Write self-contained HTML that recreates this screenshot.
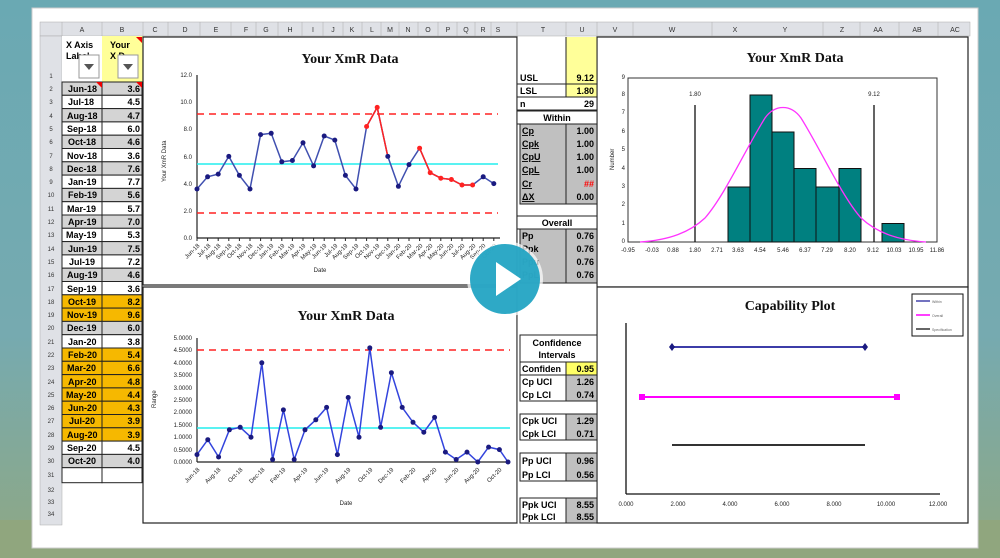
<!DOCTYPE html>
<html><head><meta charset="utf-8"><style>
html,body{margin:0;padding:0;width:1000px;height:558px;overflow:hidden}
svg{display:block}
text{font-family:"Liberation Sans",sans-serif}
.h{font-size:7px;fill:#333;text-anchor:middle}
.c{font-size:9px;font-weight:bold;fill:#000}
.r{font-size:6px;fill:#333;text-anchor:middle}
.t{font-family:"Liberation Serif",serif;font-weight:bold;font-size:14px;fill:#111;text-anchor:middle}
.ax{font-size:6px;fill:#222}
</style></head><body>
<svg width="1000" height="558" viewBox="0 0 1000 558" xmlns="http://www.w3.org/2000/svg">
<defs>
<linearGradient id="bg" x1="0" y1="0" x2="0" y2="1">
<stop offset="0" stop-color="#6aa9b3"/><stop offset="0.6" stop-color="#76aab0"/><stop offset="1" stop-color="#8fa883"/>
</linearGradient>
</defs>
<rect width="1000" height="558" fill="url(#bg)"/>
<rect x="0" y="520" width="1000" height="38" fill="#90a67e"/>
<rect x="32" y="8" width="946" height="540" fill="#fff" stroke="#ccc"/>
<rect x="40" y="20" width="930" height="505" fill="#fff"/>
<!-- column header -->
<rect x="40" y="22" width="930" height="14" fill="#dfe1e6" stroke="#aaa" stroke-width="0.5"/>
<g class="h">
<text x="82" y="32">A</text><text x="122" y="32">B</text><text x="155" y="32">C</text><text x="185" y="32">D</text><text x="216" y="32">E</text><text x="246" y="32">F</text><text x="266" y="32">G</text><text x="290" y="32">H</text><text x="313" y="32">I</text><text x="333" y="32">J</text><text x="352" y="32">K</text><text x="372" y="32">L</text><text x="390" y="32">M</text><text x="408" y="32">N</text><text x="428" y="32">O</text><text x="448" y="32">P</text><text x="466" y="32">Q</text><text x="483" y="32">R</text><text x="498" y="32">S</text><text x="543" y="32">T</text><text x="582" y="32">U</text><text x="615" y="32">V</text><text x="672" y="32">W</text><text x="735" y="32">X</text><text x="785" y="32">Y</text><text x="842" y="32">Z</text><text x="878" y="32">AA</text><text x="917" y="32">AB</text><text x="955" y="32">AC</text>
</g>
<g stroke="#aaa" stroke-width="0.5">
<line x1="62" y1="22" x2="62" y2="36"/><line x1="102" y1="22" x2="102" y2="36"/><line x1="143" y1="22" x2="143" y2="36"/><line x1="168" y1="22" x2="168" y2="36"/><line x1="200" y1="22" x2="200" y2="36"/><line x1="231" y1="22" x2="231" y2="36"/><line x1="256" y1="22" x2="256" y2="36"/><line x1="278" y1="22" x2="278" y2="36"/><line x1="302" y1="22" x2="302" y2="36"/><line x1="323" y1="22" x2="323" y2="36"/><line x1="343" y1="22" x2="343" y2="36"/><line x1="362" y1="22" x2="362" y2="36"/><line x1="381" y1="22" x2="381" y2="36"/><line x1="399" y1="22" x2="399" y2="36"/><line x1="418" y1="22" x2="418" y2="36"/><line x1="438" y1="22" x2="438" y2="36"/><line x1="457" y1="22" x2="457" y2="36"/><line x1="475" y1="22" x2="475" y2="36"/><line x1="491" y1="22" x2="491" y2="36"/><line x1="517" y1="22" x2="517" y2="36"/><line x1="566" y1="22" x2="566" y2="36"/><line x1="597" y1="22" x2="597" y2="36"/><line x1="633" y1="22" x2="633" y2="36"/><line x1="712" y1="22" x2="712" y2="36"/><line x1="823" y1="22" x2="823" y2="36"/><line x1="860" y1="22" x2="860" y2="36"/><line x1="899" y1="22" x2="899" y2="36"/><line x1="938" y1="22" x2="938" y2="36"/>
</g>
<!-- row number column -->
<rect x="40" y="36" width="22" height="489" fill="#dfe1e6" stroke="#aaa" stroke-width="0.5"/>
<g class="r">
<text x="51" y="78">1</text>
<text x="51" y="91">2</text><text x="51" y="104">3</text><text x="51" y="118">4</text><text x="51" y="131">5</text><text x="51" y="144">6</text><text x="51" y="158">7</text><text x="51" y="171">8</text><text x="51" y="184">9</text><text x="51" y="197">10</text><text x="51" y="211">11</text><text x="51" y="224">12</text><text x="51" y="237">13</text><text x="51" y="251">14</text><text x="51" y="264">15</text><text x="51" y="277">16</text><text x="51" y="291">17</text><text x="51" y="304">18</text><text x="51" y="317">19</text><text x="51" y="330">20</text><text x="51" y="344">21</text><text x="51" y="357">22</text><text x="51" y="370">23</text><text x="51" y="384">24</text><text x="51" y="397">25</text><text x="51" y="410">26</text><text x="51" y="423">27</text><text x="51" y="437">28</text><text x="51" y="450">29</text><text x="51" y="463">30</text><text x="51" y="477">31</text><text x="51" y="492">32</text><text x="51" y="504">33</text><text x="51" y="516">34</text>
</g>
<!-- header cells -->
<rect x="62" y="36" width="40" height="46" fill="#fff"/>
<rect x="102" y="36" width="41" height="46" fill="#ffff99"/>
<text x="66" y="48" class="c" font-size="7">X Axis</text><text x="66" y="59" class="c" font-size="7">Label</text>
<text x="110" y="48" class="c" font-size="7">Your</text><text x="110" y="59" class="c" font-size="7">X D</text>
<rect x="79" y="55" width="20" height="23" fill="#fff" stroke="#999"/><path d="M84 64 L94 64 L89 70Z" fill="#555"/>
<rect x="118" y="55" width="20" height="23" fill="#fff" stroke="#999"/><path d="M123 64 L133 64 L128 70Z" fill="#555"/>
<path d="M136 37 L142 37 L142 43Z" fill="#e00"/>
<!-- data rows -->
<g stroke="#222" stroke-width="1">
<rect x="62" y="82" width="40" height="13.3" fill="#d4d4d4"/><rect x="102" y="82" width="40" height="13.3" fill="#d4d4d4"/>
<rect x="62" y="95.3" width="40" height="13.3" fill="#fff"/><rect x="102" y="95.3" width="40" height="13.3" fill="#fff"/>
<rect x="62" y="108.6" width="40" height="13.3" fill="#d4d4d4"/><rect x="102" y="108.6" width="40" height="13.3" fill="#d4d4d4"/>
<rect x="62" y="121.9" width="40" height="13.3" fill="#fff"/><rect x="102" y="121.9" width="40" height="13.3" fill="#fff"/>
<rect x="62" y="135.2" width="40" height="13.3" fill="#d4d4d4"/><rect x="102" y="135.2" width="40" height="13.3" fill="#d4d4d4"/>
<rect x="62" y="148.5" width="40" height="13.3" fill="#fff"/><rect x="102" y="148.5" width="40" height="13.3" fill="#fff"/>
<rect x="62" y="161.8" width="40" height="13.3" fill="#d4d4d4"/><rect x="102" y="161.8" width="40" height="13.3" fill="#d4d4d4"/>
<rect x="62" y="175.1" width="40" height="13.3" fill="#fff"/><rect x="102" y="175.1" width="40" height="13.3" fill="#fff"/>
<rect x="62" y="188.4" width="40" height="13.3" fill="#d4d4d4"/><rect x="102" y="188.4" width="40" height="13.3" fill="#d4d4d4"/>
<rect x="62" y="201.7" width="40" height="13.3" fill="#fff"/><rect x="102" y="201.7" width="40" height="13.3" fill="#fff"/>
<rect x="62" y="215" width="40" height="13.3" fill="#d4d4d4"/><rect x="102" y="215" width="40" height="13.3" fill="#d4d4d4"/>
<rect x="62" y="228.3" width="40" height="13.3" fill="#fff"/><rect x="102" y="228.3" width="40" height="13.3" fill="#fff"/>
<rect x="62" y="241.6" width="40" height="13.3" fill="#d4d4d4"/><rect x="102" y="241.6" width="40" height="13.3" fill="#d4d4d4"/>
<rect x="62" y="254.9" width="40" height="13.3" fill="#fff"/><rect x="102" y="254.9" width="40" height="13.3" fill="#fff"/>
<rect x="62" y="268.2" width="40" height="13.3" fill="#d4d4d4"/><rect x="102" y="268.2" width="40" height="13.3" fill="#d4d4d4"/>
<rect x="62" y="281.5" width="40" height="13.3" fill="#fff"/><rect x="102" y="281.5" width="40" height="13.3" fill="#fff"/>
<rect x="62" y="294.8" width="40" height="13.3" fill="#f6b800"/><rect x="102" y="294.8" width="40" height="13.3" fill="#f6b800"/>
<rect x="62" y="308.1" width="40" height="13.3" fill="#f6b800"/><rect x="102" y="308.1" width="40" height="13.3" fill="#f6b800"/>
<rect x="62" y="321.4" width="40" height="13.3" fill="#d4d4d4"/><rect x="102" y="321.4" width="40" height="13.3" fill="#d4d4d4"/>
<rect x="62" y="334.7" width="40" height="13.3" fill="#fff"/><rect x="102" y="334.7" width="40" height="13.3" fill="#fff"/>
<rect x="62" y="348" width="40" height="13.3" fill="#f6b800"/><rect x="102" y="348" width="40" height="13.3" fill="#f6b800"/>
<rect x="62" y="361.3" width="40" height="13.3" fill="#f6b800"/><rect x="102" y="361.3" width="40" height="13.3" fill="#f6b800"/>
<rect x="62" y="374.6" width="40" height="13.3" fill="#f6b800"/><rect x="102" y="374.6" width="40" height="13.3" fill="#f6b800"/>
<rect x="62" y="387.9" width="40" height="13.3" fill="#f6b800"/><rect x="102" y="387.9" width="40" height="13.3" fill="#f6b800"/>
<rect x="62" y="401.2" width="40" height="13.3" fill="#f6b800"/><rect x="102" y="401.2" width="40" height="13.3" fill="#f6b800"/>
<rect x="62" y="414.5" width="40" height="13.3" fill="#f6b800"/><rect x="102" y="414.5" width="40" height="13.3" fill="#f6b800"/>
<rect x="62" y="427.8" width="40" height="13.3" fill="#f6b800"/><rect x="102" y="427.8" width="40" height="13.3" fill="#f6b800"/>
<rect x="62" y="441.1" width="40" height="13.3" fill="#fff"/><rect x="102" y="441.1" width="40" height="13.3" fill="#fff"/>
<rect x="62" y="454.4" width="40" height="13.3" fill="#d4d4d4"/><rect x="102" y="454.4" width="40" height="13.3" fill="#d4d4d4"/>
<rect x="62" y="467.7" width="40" height="15" fill="#fff"/><rect x="102" y="467.7" width="40" height="15" fill="#fff"/>
</g>
<g class="c" font-size="8.5">
<text x="68" y="92">Jun-18</text><text x="68" y="105">Jul-18</text><text x="67" y="119">Aug-18</text><text x="67" y="132">Sep-18</text><text x="68" y="145">Oct-18</text><text x="67" y="159">Nov-18</text><text x="67" y="172">Dec-18</text><text x="68" y="185">Jan-19</text><text x="68" y="198">Feb-19</text><text x="67" y="212">Mar-19</text><text x="68" y="225">Apr-19</text><text x="66" y="238">May-19</text><text x="68" y="252">Jun-19</text><text x="69" y="265">Jul-19</text><text x="67" y="278">Aug-19</text><text x="67" y="292">Sep-19</text><text x="68" y="305">Oct-19</text><text x="67" y="318">Nov-19</text><text x="67" y="331">Dec-19</text><text x="68" y="345">Jan-20</text><text x="68" y="358">Feb-20</text><text x="67" y="371">Mar-20</text><text x="68" y="385">Apr-20</text><text x="66" y="398">May-20</text><text x="68" y="411">Jun-20</text><text x="69" y="424">Jul-20</text><text x="67" y="438">Aug-20</text><text x="67" y="451">Sep-20</text><text x="68" y="464">Oct-20</text>
</g>
<g class="c" font-size="8.5" text-anchor="end">
<text x="140" y="92">3.6</text><text x="140" y="105">4.5</text><text x="140" y="119">4.7</text><text x="140" y="132">6.0</text><text x="140" y="145">4.6</text><text x="140" y="159">3.6</text><text x="140" y="172">7.6</text><text x="140" y="185">7.7</text><text x="140" y="198">5.6</text><text x="140" y="212">5.7</text><text x="140" y="225">7.0</text><text x="140" y="238">5.3</text><text x="140" y="252">7.5</text><text x="140" y="265">7.2</text><text x="140" y="278">4.6</text><text x="140" y="292">3.6</text><text x="140" y="305">8.2</text><text x="140" y="318">9.6</text><text x="140" y="331">6.0</text><text x="140" y="345">3.8</text><text x="140" y="358">5.4</text><text x="140" y="371">6.6</text><text x="140" y="385">4.8</text><text x="140" y="398">4.4</text><text x="140" y="411">4.3</text><text x="140" y="424">3.9</text><text x="140" y="438">3.9</text><text x="140" y="451">4.5</text><text x="140" y="464">4.0</text>
</g>
<path d="M96 82 L102 82 L102 88Z M136 82 L142 82 L142 88Z" fill="#e00"/>

<!-- chart frames -->
<g fill="#fff" stroke="#222" stroke-width="1.2">
<rect x="143" y="37" width="374" height="248"/>
<rect x="143" y="287" width="374" height="236"/>
<rect x="597" y="37" width="371" height="250"/>
<rect x="597" y="287" width="371" height="236"/>
</g>

<!-- Chart 1 -->
<text x="350" y="63" class="t">Your XmR Data</text>
<g stroke="#222" stroke-width="1.2"><line x1="197" y1="75" x2="197" y2="238"/><line x1="197" y1="238" x2="500" y2="238"/></g>
<g class="ax" text-anchor="end"><text x="192" y="240">0.0</text><text x="192" y="213">2.0</text><text x="192" y="186">4.0</text><text x="192" y="159">6.0</text><text x="192" y="131">8.0</text><text x="192" y="104">10.0</text><text x="192" y="77">12.0</text></g>
<text x="0" y="0" class="ax" transform="translate(166,182) rotate(-90)">Your XmR Data</text>
<line x1="197" y1="114" x2="498" y2="114" stroke="#f22" stroke-width="1.5" stroke-dasharray="7,5"/>
<line x1="197" y1="213" x2="498" y2="213" stroke="#f22" stroke-width="1.5" stroke-dasharray="7,5"/>
<line x1="197" y1="164" x2="498" y2="164" stroke="#2ee" stroke-width="1.5"/>
<polyline fill="none" stroke="#4050b0" stroke-width="1.5" points="197,189 207.6,176.8 218.2,174.1 228.8,156.4 239.4,175.4 250,189 260.6,134.6 271.2,133.3 281.8,161.8 292.4,160.5 303,142.8 313.6,165.9 324.2,136 334.8,140.1 345.4,175.4 356,189 366.6,126.5 377.2,107.4 387.8,156.4 398.4,186.3 409,164.6 419.6,148.2 430.2,172.7 440.8,178.2 451.4,179.5 462,185 472.6,185 483.2,176.8 493.8,183.6"/>
<polyline fill="none" stroke="#f22" stroke-width="1.5" points="366.6,126.5 377.2,107.4 387.8,156.4"/>
<polyline fill="none" stroke="#f22" stroke-width="1.5" points="419.6,148.2 430.2,172.7 440.8,178.2 451.4,179.5 462,185 472.6,185"/>
<g fill="#1a1a80"><circle cx="197" cy="189" r="2.5"/><circle cx="207.6" cy="176.8" r="2.5"/><circle cx="218.2" cy="174.1" r="2.5"/><circle cx="228.8" cy="156.4" r="2.5"/><circle cx="239.4" cy="175.4" r="2.5"/><circle cx="250" cy="189" r="2.5"/><circle cx="260.6" cy="134.6" r="2.5"/><circle cx="271.2" cy="133.3" r="2.5"/><circle cx="281.8" cy="161.8" r="2.5"/><circle cx="292.4" cy="160.5" r="2.5"/><circle cx="303" cy="142.8" r="2.5"/><circle cx="313.6" cy="165.9" r="2.5"/><circle cx="324.2" cy="136" r="2.5"/><circle cx="334.8" cy="140.1" r="2.5"/><circle cx="345.4" cy="175.4" r="2.5"/><circle cx="356" cy="189" r="2.5"/><circle cx="387.8" cy="156.4" r="2.5"/><circle cx="398.4" cy="186.3" r="2.5"/><circle cx="409" cy="164.6" r="2.5"/><circle cx="483.2" cy="176.8" r="2.5"/><circle cx="493.8" cy="183.6" r="2.5"/></g>
<g fill="#f22"><circle cx="366.6" cy="126.5" r="2.5"/><circle cx="377.2" cy="107.4" r="2.5"/><circle cx="419.6" cy="148.2" r="2.5"/><circle cx="430.2" cy="172.7" r="2.5"/><circle cx="440.8" cy="178.2" r="2.5"/><circle cx="451.4" cy="179.5" r="2.5"/><circle cx="462" cy="185" r="2.5"/><circle cx="472.6" cy="185" r="2.5"/></g>
<path d="M197 238v3M207.6 238v3M218.2 238v3M228.8 238v3M239.4 238v3M250 238v3M260.6 238v3M271.2 238v3M281.8 238v3M292.4 238v3M303 238v3M313.6 238v3M324.2 238v3M334.8 238v3M345.4 238v3M356 238v3M366.6 238v3M377.2 238v3M387.8 238v3M398.4 238v3M409 238v3M419.6 238v3M430.2 238v3M440.8 238v3M451.4 238v3M462 238v3M472.6 238v3M483.2 238v3M493.8 238v3" stroke="#222"/>
<g class="ax" font-size="5.5" fill="#666" text-anchor="end">
<text transform="translate(200,246) rotate(-45)">Jun-18</text><text transform="translate(211,246) rotate(-45)">Jul-18</text><text transform="translate(221,246) rotate(-45)">Aug-18</text><text transform="translate(232,246) rotate(-45)">Sep-18</text><text transform="translate(242,246) rotate(-45)">Oct-18</text><text transform="translate(253,246) rotate(-45)">Nov-18</text><text transform="translate(264,246) rotate(-45)">Dec-18</text><text transform="translate(274,246) rotate(-45)">Jan-19</text><text transform="translate(285,246) rotate(-45)">Feb-19</text><text transform="translate(295,246) rotate(-45)">Mar-19</text><text transform="translate(306,246) rotate(-45)">Apr-19</text><text transform="translate(317,246) rotate(-45)">May-19</text><text transform="translate(327,246) rotate(-45)">Jun-19</text><text transform="translate(338,246) rotate(-45)">Jul-19</text><text transform="translate(348,246) rotate(-45)">Aug-19</text><text transform="translate(359,246) rotate(-45)">Sep-19</text><text transform="translate(370,246) rotate(-45)">Oct-19</text><text transform="translate(380,246) rotate(-45)">Nov-19</text><text transform="translate(391,246) rotate(-45)">Dec-19</text><text transform="translate(401,246) rotate(-45)">Jan-20</text><text transform="translate(412,246) rotate(-45)">Feb-20</text><text transform="translate(423,246) rotate(-45)">Mar-20</text><text transform="translate(433,246) rotate(-45)">Apr-20</text><text transform="translate(444,246) rotate(-45)">May-20</text><text transform="translate(454,246) rotate(-45)">Jun-20</text><text transform="translate(465,246) rotate(-45)">Jul-20</text><text transform="translate(476,246) rotate(-45)">Aug-20</text><text transform="translate(486,246) rotate(-45)">Sep-20</text><text transform="translate(497,246) rotate(-45)">Oct-20</text>
</g>
<text x="320" y="272" class="ax" text-anchor="middle">Date</text>

<!-- Chart 2 -->
<text x="346" y="320" class="t">Your XmR Data</text>
<g stroke="#222" stroke-width="1.2"><line x1="197" y1="338" x2="197" y2="462"/><line x1="197" y1="462" x2="510" y2="462"/></g>
<g class="ax" font-size="5.5" text-anchor="end"><text x="192" y="464">0.0000</text><text x="192" y="452">0.5000</text><text x="192" y="439">1.0000</text><text x="192" y="427">1.5000</text><text x="192" y="414">2.0000</text><text x="192" y="402">2.5000</text><text x="192" y="390">3.0000</text><text x="192" y="377">3.5000</text><text x="192" y="365">4.0000</text><text x="192" y="352">4.5000</text><text x="192" y="340">5.0000</text></g>
<text class="ax" transform="translate(156,408) rotate(-90)">Range</text>
<line x1="197" y1="350" x2="510" y2="350" stroke="#f22" stroke-width="1.5" stroke-dasharray="7,5"/>
<line x1="197" y1="428" x2="510" y2="428" stroke="#2ee" stroke-width="1.5"/>
<polyline fill="none" stroke="#3344dd" stroke-width="1.5" points="197,454.6 207.8,439.7 218.6,457 229.4,429.8 240.2,427.3 251,437.2 261.8,362.8 272.6,459.5 283.4,409.9 294.2,459.5 305,429.8 315.8,419.8 326.6,407.4 337.4,454.6 348.2,397.5 359,437.2 369.8,347.9 380.6,427.3 391.4,372.7 402.2,407.4 413,422.3 423.8,432.2 434.6,417.4 445.4,452.1 456.2,459.5 467,452.1 477.8,462 488.6,447.1 499.4,449.6 508,462"/>
<g fill="#1a1a80"><circle cx="197" cy="454.6" r="2.5"/><circle cx="207.8" cy="439.7" r="2.5"/><circle cx="218.6" cy="457" r="2.5"/><circle cx="229.4" cy="429.8" r="2.5"/><circle cx="240.2" cy="427.3" r="2.5"/><circle cx="251" cy="437.2" r="2.5"/><circle cx="261.8" cy="362.8" r="2.5"/><circle cx="272.6" cy="459.5" r="2.5"/><circle cx="283.4" cy="409.9" r="2.5"/><circle cx="294.2" cy="459.5" r="2.5"/><circle cx="305" cy="429.8" r="2.5"/><circle cx="315.8" cy="419.8" r="2.5"/><circle cx="326.6" cy="407.4" r="2.5"/><circle cx="337.4" cy="454.6" r="2.5"/><circle cx="348.2" cy="397.5" r="2.5"/><circle cx="359" cy="437.2" r="2.5"/><circle cx="369.8" cy="347.9" r="2.5"/><circle cx="380.6" cy="427.3" r="2.5"/><circle cx="391.4" cy="372.7" r="2.5"/><circle cx="402.2" cy="407.4" r="2.5"/><circle cx="413" cy="422.3" r="2.5"/><circle cx="423.8" cy="432.2" r="2.5"/><circle cx="434.6" cy="417.4" r="2.5"/><circle cx="445.4" cy="452.1" r="2.5"/><circle cx="456.2" cy="459.5" r="2.5"/><circle cx="467" cy="452.1" r="2.5"/><circle cx="477.8" cy="462" r="2.5"/><circle cx="488.6" cy="447.1" r="2.5"/><circle cx="499.4" cy="449.6" r="2.5"/><circle cx="508" cy="462" r="2.5"/></g>
<g class="ax" font-size="5.5" fill="#666" text-anchor="end">
<text transform="translate(200,470) rotate(-45)">Jun-18</text><text transform="translate(221,470) rotate(-45)">Aug-18</text><text transform="translate(243,470) rotate(-45)">Oct-18</text><text transform="translate(265,470) rotate(-45)">Dec-18</text><text transform="translate(286,470) rotate(-45)">Feb-19</text><text transform="translate(308,470) rotate(-45)">Apr-19</text><text transform="translate(329,470) rotate(-45)">Jun-19</text><text transform="translate(351,470) rotate(-45)">Aug-19</text><text transform="translate(373,470) rotate(-45)">Oct-19</text><text transform="translate(394,470) rotate(-45)">Dec-19</text><text transform="translate(416,470) rotate(-45)">Feb-20</text><text transform="translate(437,470) rotate(-45)">Apr-20</text><text transform="translate(459,470) rotate(-45)">Jun-20</text><text transform="translate(480,470) rotate(-45)">Aug-20</text><text transform="translate(502,470) rotate(-45)">Oct-20</text>
</g>
<text x="346" y="505" class="ax" text-anchor="middle">Date</text>

<!-- T/U stats -->
<rect x="517" y="37" width="80" height="486" fill="#fff"/>
<rect x="566" y="37" width="31" height="60" fill="#ffff99"/>
<g stroke="#222" stroke-width="1" fill="none">
<line x1="566" y1="37" x2="566" y2="97"/><line x1="597" y1="37" x2="597" y2="523"/><line x1="517" y1="37" x2="517" y2="523"/>
<rect x="517" y="84" width="80" height="13"/><rect x="517" y="97" width="80" height="13"/>
</g>
<text x="520" y="81" class="c" font-size="7">USL</text><text x="594" y="81" class="c" font-size="7" text-anchor="end">9.12</text>
<text x="520" y="94" class="c">LSL</text><text x="594" y="94" class="c" font-size="8" text-anchor="end">1.80</text>
<text x="520" y="107" class="c" font-size="7">n</text><text x="594" y="107" class="c" font-size="8" text-anchor="end">29</text>
<rect x="517" y="111" width="80" height="13" fill="#fff" stroke="#222"/><text x="557" y="121" class="c" text-anchor="middle">Within</text>
<rect x="520" y="124" width="46" height="80" fill="#c0c0c0" stroke="#222"/><rect x="566" y="124" width="31" height="80" fill="#c0c0c0" stroke="#222"/>
<g class="c" fill="#1a1acc" font-size="8" text-decoration="underline"><text x="522" y="134">Cp</text><text x="522" y="147">Cpk</text><text x="522" y="160">CpU</text><text x="522" y="173">CpL</text><text x="522" y="187">Cr</text><text x="522" y="200">ΔX</text></g>
<g class="c" font-size="8" text-anchor="end"><text x="594" y="134">1.00</text><text x="594" y="147">1.00</text><text x="594" y="160">1.00</text><text x="594" y="173">1.00</text><text x="594" y="187" fill="#f00">##</text><text x="594" y="200">0.00</text></g>
<rect x="517" y="216" width="80" height="13" fill="#fff" stroke="#222"/><text x="557" y="226" class="c" text-anchor="middle">Overall</text>
<rect x="520" y="229" width="46" height="54" fill="#c0c0c0" stroke="#222"/><rect x="566" y="229" width="31" height="54" fill="#c0c0c0" stroke="#222"/>
<g class="c" font-size="8"><text x="522" y="239">Pp</text><text x="522" y="252">Ppk</text><text x="522" y="265">Ppu</text><text x="522" y="278">PpL</text></g>
<g class="c" font-size="8" text-anchor="end"><text x="594" y="239">0.76</text><text x="594" y="252">0.76</text><text x="594" y="265">0.76</text><text x="594" y="278">0.76</text></g>
<rect x="520" y="335" width="77" height="27" fill="#fff" stroke="#222"/>
<text x="557" y="346" class="c" text-anchor="middle" font-size="8">Confidence</text><text x="557" y="358" class="c" text-anchor="middle" font-size="8">Intervals</text>
<rect x="520" y="362" width="46" height="13" fill="#fff" stroke="#222"/><rect x="566" y="362" width="31" height="13" fill="#ffff66" stroke="#222"/>
<text x="522" y="372" class="c" font-size="8">Confiden</text><text x="594" y="372" class="c" font-size="8" text-anchor="end">0.95</text>
<rect x="520" y="375" width="46" height="26" fill="#fff" stroke="#222"/><rect x="566" y="375" width="31" height="26" fill="#c0c0c0" stroke="#222"/>
<text x="522" y="385" class="c" font-size="7.5">Cp UCI</text><text x="522" y="398" class="c" font-size="7.5">Cp LCI</text><text x="594" y="385" class="c" font-size="8" text-anchor="end">1.26</text><text x="594" y="398" class="c" font-size="8" text-anchor="end">0.74</text>
<rect x="520" y="414" width="46" height="26" fill="#fff" stroke="#222"/><rect x="566" y="414" width="31" height="26" fill="#c0c0c0" stroke="#222"/>
<text x="522" y="424" class="c" font-size="7.5">Cpk UCI</text><text x="522" y="437" class="c" font-size="7.5">Cpk LCI</text><text x="594" y="424" class="c" font-size="8" text-anchor="end">1.29</text><text x="594" y="437" class="c" font-size="8" text-anchor="end">0.71</text>
<rect x="520" y="453" width="46" height="28" fill="#fff" stroke="#222"/><rect x="566" y="453" width="31" height="28" fill="#c0c0c0" stroke="#222"/>
<text x="522" y="464" class="c" font-size="7.5">Pp UCI</text><text x="522" y="478" class="c" font-size="7.5">Pp LCI</text><text x="594" y="464" class="c" font-size="8" text-anchor="end">0.96</text><text x="594" y="478" class="c" font-size="8" text-anchor="end">0.56</text>
<rect x="520" y="498" width="46" height="25" fill="#fff" stroke="#222"/><rect x="566" y="498" width="31" height="25" fill="#c0c0c0" stroke="#222"/>
<text x="522" y="508" class="c" font-size="6">Ppk UCI</text><text x="522" y="520" class="c" font-size="6">Ppk LCI</text><text x="594" y="508" class="c" font-size="6.5" text-anchor="end">8.55</text><text x="594" y="520" class="c" font-size="6.5" text-anchor="end">8.55</text>

<!-- Histogram -->
<text x="795" y="62" class="t">Your XmR Data</text>
<rect x="628" y="78" width="309" height="164" fill="#fff" stroke="#333" stroke-width="1"/>
<g fill="#008080" stroke="#111" stroke-width="1">
<rect x="728" y="187" width="22" height="55"/><rect x="750" y="95" width="22" height="147"/><rect x="772" y="132" width="22" height="110"/><rect x="794" y="168.5" width="22" height="73.5"/><rect x="816" y="187" width="23" height="55"/><rect x="839" y="168.5" width="22" height="73.5"/><rect x="882" y="223.5" width="22" height="18.5"/>
</g>
<g stroke="#111" stroke-width="1.3"><line x1="695" y1="105" x2="695" y2="242"/><line x1="874" y1="105" x2="874" y2="242"/></g>
<text x="695" y="96" class="ax" text-anchor="middle">1.80</text><text x="874" y="96" class="ax" text-anchor="middle">9.12</text>
<path d="M640 242 C670 240 690 232 705 218 C725 195 745 150 765 118 C775 104 791 104 801 118 C821 150 841 195 861 218 C876 232 896 240 926 242" fill="none" stroke="#f3f" stroke-width="1.3"/>
<g class="ax" font-size="5.5" text-anchor="middle"><text x="628" y="252">-0.95</text><text x="652" y="252">-0.03</text><text x="673" y="252">0.88</text><text x="695" y="252">1.80</text><text x="717" y="252">2.71</text><text x="738" y="252">3.63</text><text x="760" y="252">4.54</text><text x="783" y="252">5.46</text><text x="805" y="252">6.37</text><text x="827" y="252">7.29</text><text x="850" y="252">8.20</text><text x="873" y="252">9.12</text><text x="894" y="252">10.03</text><text x="916" y="252">10.95</text><text x="937" y="252">11.86</text></g>
<g class="ax" font-size="5.5" text-anchor="end"><text x="625" y="243">0</text><text x="625" y="225">1</text><text x="625" y="206">2</text><text x="625" y="188">3</text><text x="625" y="170">4</text><text x="625" y="151">5</text><text x="625" y="133">6</text><text x="625" y="114">7</text><text x="625" y="96">8</text><text x="625" y="79">9</text></g>
<text class="ax" transform="translate(614,170) rotate(-90)">Number</text>

<!-- Capability plot -->
<text x="790" y="310" class="t">Capability Plot</text>
<rect x="912" y="294" width="51" height="42" fill="#fff" stroke="#111"/>
<line x1="916" y1="301" x2="930" y2="301" stroke="#44a" stroke-width="1.5"/><line x1="916" y1="315" x2="930" y2="315" stroke="#f0f" stroke-width="1.5"/><line x1="916" y1="329" x2="930" y2="329" stroke="#333" stroke-width="1.5"/>
<g font-size="3.5" fill="#666"><text x="932" y="303">Within</text><text x="932" y="317">Overall</text><text x="932" y="331">Specification</text></g>
<g stroke="#111" stroke-width="1.3"><line x1="626" y1="323" x2="626" y2="494"/><line x1="626" y1="494" x2="940" y2="494"/></g>
<line x1="672" y1="347" x2="865" y2="347" stroke="#3c3ca8" stroke-width="2"/>
<path d="M672 343 L675 347 L672 351 L669 347Z M865 343 L868 347 L865 351 L862 347Z" fill="#1a1a80"/>
<line x1="642" y1="397" x2="897" y2="397" stroke="#f0f" stroke-width="2"/>
<rect x="639" y="394" width="6" height="6" fill="#f0f"/><rect x="894" y="394" width="6" height="6" fill="#f0f"/>
<line x1="672" y1="445" x2="865" y2="445" stroke="#333" stroke-width="2"/>
<g class="ax" font-size="6" text-anchor="middle"><text x="626" y="506">0.000</text><text x="678" y="506">2.000</text><text x="730" y="506">4.000</text><text x="782" y="506">6.000</text><text x="834" y="506">8.000</text><text x="886" y="506">10.000</text><text x="938" y="506">12.000</text></g>

<!-- play button -->
<circle cx="505" cy="279" r="38" fill="#fff" opacity="0.7"/>
<circle cx="505" cy="279" r="35" fill="#1ea2c2" opacity="0.93"/>
<path d="M496 262 L521 279 L496 296Z" fill="#fff"/>
</svg>
</body></html>
